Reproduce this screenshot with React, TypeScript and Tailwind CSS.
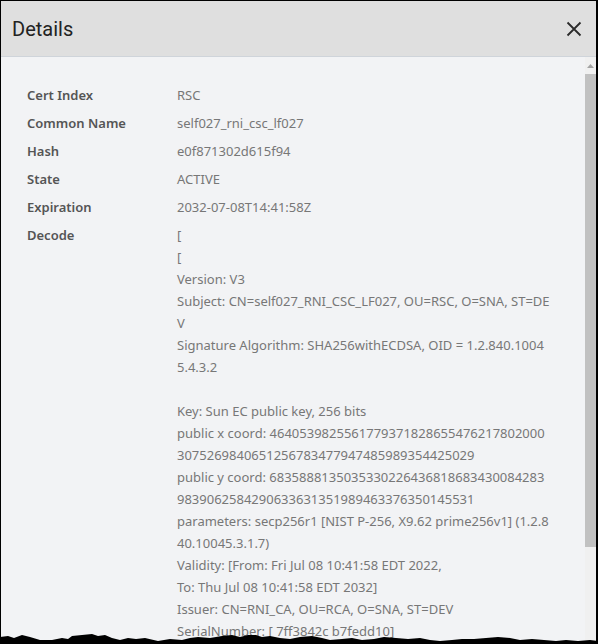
import React from "react";

const rows: [string, string][] = [
  ["Cert Index", "RSC"],
  ["Common Name", "self027_rni_csc_lf027"],
  ["Hash", "e0f871302d615f94"],
  ["State", "ACTIVE"],
  ["Expiration", "2032-07-08T14:41:58Z"],
];

const decode: string[] = [
  "[",
  "[",
  "Version: V3",
  "Subject: CN=self027_RNI_CSC_LF027, OU=RSC, O=SNA, ST=DE",
  "V",
  "Signature Algorithm: SHA256withECDSA, OID = 1.2.840.1004",
  "5.4.3.2",
  "",
  "Key: Sun EC public key, 256 bits",
  "public x coord: 4640539825561779371828655476217802000",
  "3075269840651256783477947485989354425029",
  "public y coord: 6835888135035330226436818683430084283",
  "9839062584290633631351989463376350145531",
  "parameters: secp256r1 [NIST P-256, X9.62 prime256v1] (1.2.8",
  "40.10045.3.1.7)",
  "Validity: [From: Fri Jul 08 10:41:58 EDT 2022,",
  "To: Thu Jul 08 10:41:58 EDT 2032]",
  "Issuer: CN=RNI_CA, OU=RCA, O=SNA, ST=DEV",
  "SerialNumber: [ 7ff3842c b7fedd10]",
];

export default function App() {
  return (
    <div className="relative w-[598px] h-[644px] overflow-hidden bg-black">
      <div className="absolute inset-0 ml-px mt-px mr-[2px] flex flex-col bg-[#f2f3f5]">
        <div className="h-[56px] shrink-0 flex items-center justify-between bg-[#dfdfdf] border-b border-[#cfd4da] pl-[11px] pr-[14px]">
          <span className="text-[20px] text-[#222] leading-none" style={{ fontFamily: "Roboto, sans-serif" }}>
            Details
          </span>
          <svg width="16" height="16" viewBox="0 0 16 16" className="mt-[1px]">
            <path d="M1.5 1.5 L14.5 14.5 M14.5 1.5 L1.5 14.5" stroke="#2b2b2b" strokeWidth="1.8" fill="none" />
          </svg>
        </div>
        <div className="flex flex-1 min-h-0">
          <div
            className="flex-1 min-w-0 overflow-hidden pt-[24px] pl-[26px] text-[13px]"
            style={{ fontFamily: '"Noto Sans", sans-serif' }}
          >
            {rows.map(([k, v]) => (
              <div key={k} className="flex py-[3px] leading-[22px]">
                <div className="w-[150px] shrink-0 font-semibold text-[#555]">{k}</div>
                <div className="text-[#777]">{v}</div>
              </div>
            ))}
            <div className="flex py-[3px] leading-[22px]">
              <div className="w-[150px] shrink-0 font-semibold text-[#555]">Decode</div>
              <div className="text-[#777] whitespace-pre">
                {decode.map((l, i) => (
                  <div key={i} className="h-[22px]">
                    {l}
                  </div>
                ))}
              </div>
            </div>
          </div>
          <div className="w-[11px] shrink-0 bg-[#f0f0f0] flex flex-col">
            <div className="h-[17px] flex items-center justify-center">
              <svg width="7" height="4" viewBox="0 0 7 4">
                <path d="M0 4 L3.5 0 L7 4 Z" fill="#a3a3a3" />
              </svg>
            </div>
            <div className="h-[473px] bg-[#c1c1c1]" />
          </div>
        </div>
      </div>
      <svg className="absolute left-0 bottom-0" width="598" height="16" viewBox="0 0 598 16">
        <path
          d="M0 9 L8 8 L14 10 L22 7 L30 9 L40 12 L52 12 L62 10 L68 11 L72 8 L82 7 L92 6 L98 8 L105 7 L112 10 L120 12 L128 10 L136 11 L145 10 L158 13 L170 11 L182 12 L190 10 L198 9 L210 10 L222 8 L232 7 L240 9 L248 7 L256 7 L262 9 L270 8 L280 10 L290 11 L300 9 L312 8 L322 10 L330 12 L342 11 L352 10 L362 12 L374 11 L384 9 L396 10 L408 11 L420 10 L430 12 L440 13 L452 12 L462 11 L474 11 L486 10 L498 9 L510 10 L520 12 L532 11 L544 12 L556 13 L566 12 L578 13 L590 12 L598 13 L598 16 L0 16 Z"
          fill="#000"
        />
      </svg>
    </div>
  );
}
